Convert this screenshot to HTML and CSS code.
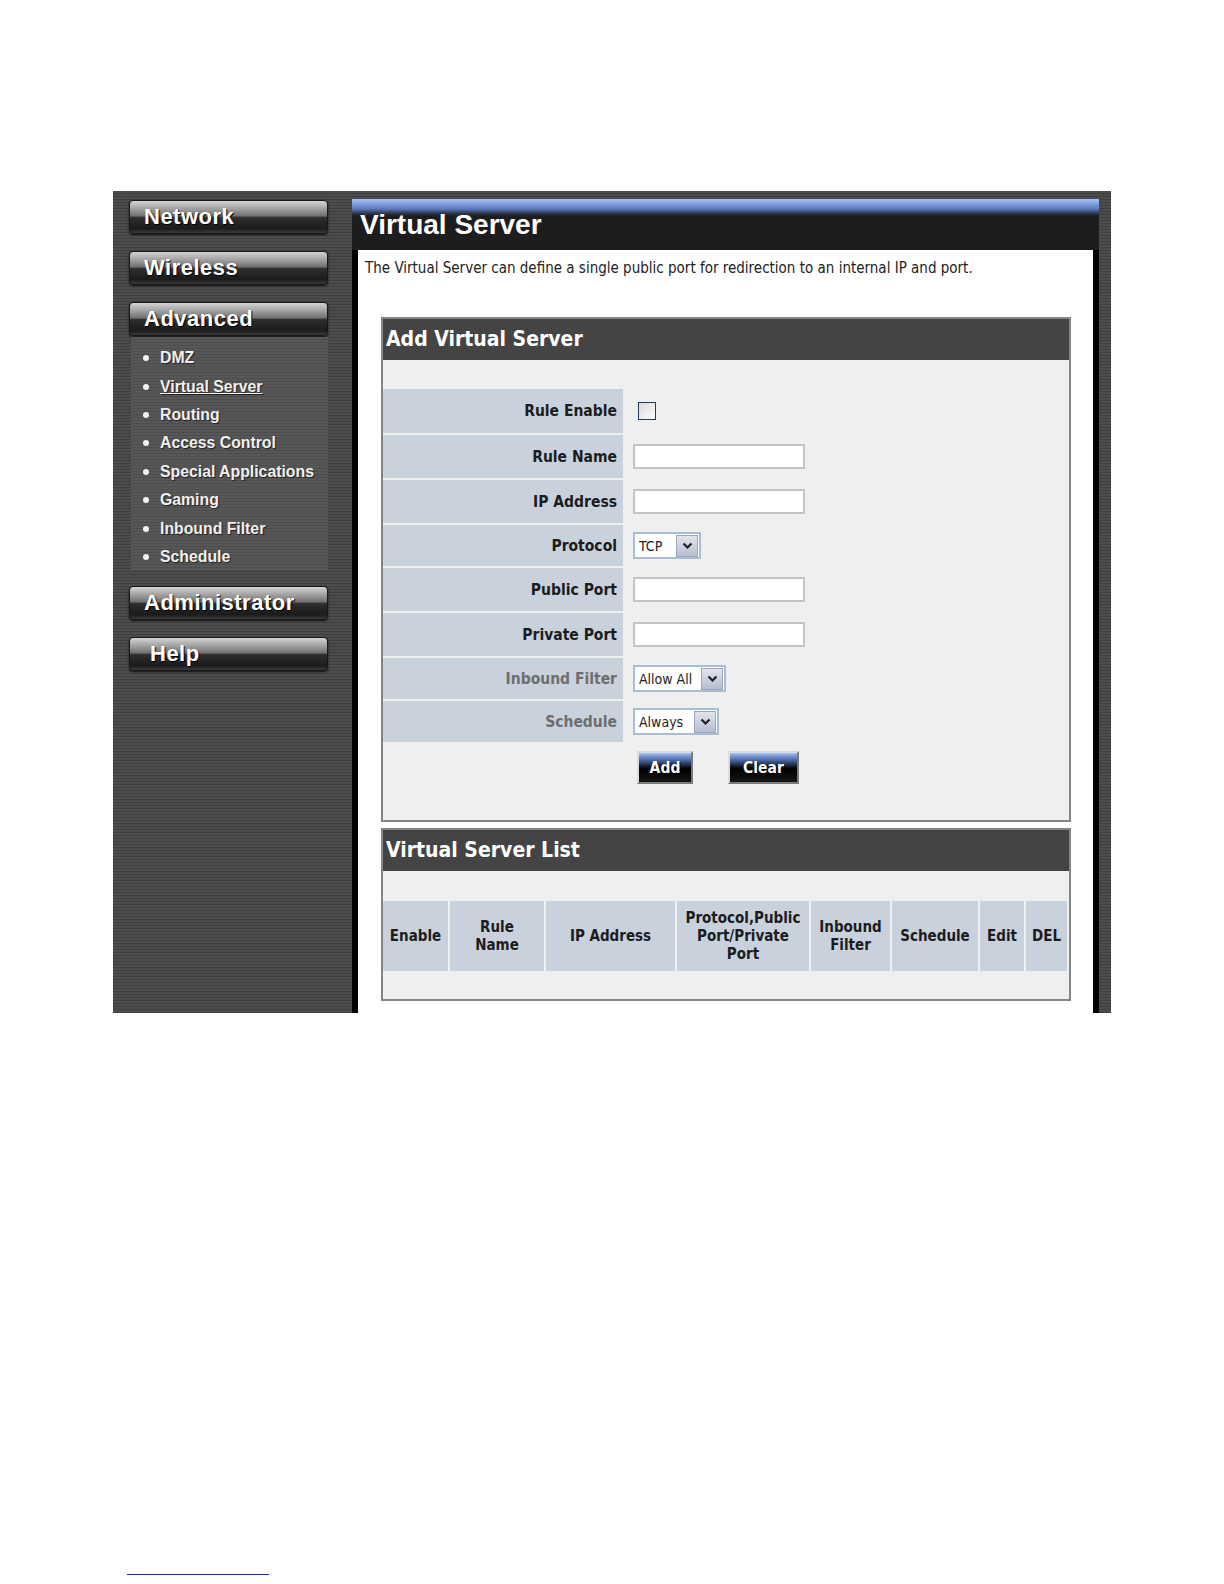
FILE: index.html
```html
<!DOCTYPE html>
<html lang="en">
<head>
<meta charset="UTF-8">
<title>Virtual Server</title>
<link rel="stylesheet" href="styles.css">
</head>
<body>
<div class="frame">
    <div class="sidebar">
        <a class="nav-btn" href="#">Network</a>
        <a class="nav-btn" href="#">Wireless</a>
        <a class="nav-btn nav-open" href="#">Advanced</a>
        <ul class="submenu">
            <li><a href="#">DMZ</a></li>
            <li><a href="#" class="current">Virtual Server</a></li>
            <li><a href="#">Routing</a></li>
            <li><a href="#">Access Control</a></li>
            <li><a href="#">Special Applications</a></li>
            <li><a href="#">Gaming</a></li>
            <li><a href="#">Inbound Filter</a></li>
            <li><a href="#">Schedule</a></li>
        </ul>
        <a class="nav-btn nav-admin" href="#">Administrator</a>
        <a class="nav-btn nav-help" href="#">Help</a>
    </div>

    <div class="main">
        <div class="title-bar"><h1>Virtual Server</h1></div>
        <div class="content">
            <p class="intro">The Virtual Server can define a single public port for redirection to an internal IP and port.</p>

            <div class="box add-box">
                <div class="box-head">Add Virtual Server</div>
                <div class="box-body">
                    <div class="form-row first">
                        <label>Rule Enable</label>
                        <div class="field"><input type="checkbox" class="check"></div>
                    </div>
                    <div class="form-row tall">
                        <label>Rule Name</label>
                        <div class="field"><input type="text" class="text-in"></div>
                    </div>
                    <div class="form-row tall">
                        <label>IP Address</label>
                        <div class="field"><input type="text" class="text-in"></div>
                    </div>
                    <div class="form-row">
                        <label>Protocol</label>
                        <div class="field">
                            <div class="select sel-tcp"><span class="select-val">TCP</span><span class="select-arrow"><svg width="11" height="9" viewBox="0 0 11 9"><path d="M1.5 2.5 L5.5 6.5 L9.5 2.5" fill="none" stroke="#1e1e1e" stroke-width="2.2"/></svg></span></div>
                        </div>
                    </div>
                    <div class="form-row tall">
                        <label>Public Port</label>
                        <div class="field"><input type="text" class="text-in"></div>
                    </div>
                    <div class="form-row tall">
                        <label>Private Port</label>
                        <div class="field"><input type="text" class="text-in"></div>
                    </div>
                    <div class="form-row">
                        <label class="dim">Inbound Filter</label>
                        <div class="field">
                            <div class="select sel-allow"><span class="select-val">Allow All</span><span class="select-arrow"><svg width="11" height="9" viewBox="0 0 11 9"><path d="M1.5 2.5 L5.5 6.5 L9.5 2.5" fill="none" stroke="#1e1e1e" stroke-width="2.2"/></svg></span></div>
                        </div>
                    </div>
                    <div class="form-row">
                        <label class="dim">Schedule</label>
                        <div class="field">
                            <div class="select sel-always"><span class="select-val">Always</span><span class="select-arrow"><svg width="11" height="9" viewBox="0 0 11 9"><path d="M1.5 2.5 L5.5 6.5 L9.5 2.5" fill="none" stroke="#1e1e1e" stroke-width="2.2"/></svg></span></div>
                        </div>
                    </div>
                    <div class="btn-row">
                        <button class="btn btn-add">Add</button>
                        <button class="btn btn-clear">Clear</button>
                    </div>
                </div>
            </div>

            <div class="box list-box">
                <div class="box-head">Virtual Server List</div>
                <div class="box-body">
                    <div class="list-head">
                        <div>Enable</div>
                        <div>Rule<br>Name</div>
                        <div>IP Address</div>
                        <div>Protocol,Public<br>Port/Private<br>Port</div>
                        <div>Inbound<br>Filter</div>
                        <div>Schedule</div>
                        <div>Edit</div>
                        <div>DEL</div>
                    </div>
                </div>
            </div>
        </div>
    </div>
</div>
<div class="footnote-rule"></div>
</body>
</html>
```

FILE: styles.css
```css
body {
  margin: 0;
  background: #fff;
  font-family: "DejaVu Sans Condensed", "DejaVu Sans", sans-serif;
}

.frame {
  display: flex;
  width: 998px;
  height: 822px;
  margin: 191px 0 0 113px;
  background: repeating-linear-gradient(to bottom, #4c4c4c 0, #4c4c4c 2px, #3f3f3f 2px, #3f3f3f 3px);
}

/* left menu */
.sidebar {
  width: 239px;
  padding: 9px 0 0 16px;
  box-sizing: border-box;
  display: flex;
  flex-direction: column;
  align-items: flex-start;
}
.nav-btn {
  display: block;
  width: 199px;
  height: 34px;
  box-sizing: border-box;
  padding-left: 14px;
  margin-bottom: 17px;
  border: 1px solid #181818;
  border-radius: 4px;
  background: linear-gradient(to bottom, #d4d4d4 0%, #a6a6a6 22%, #727272 46%, #2e2e2e 52%, #1b1b1b 86%, #3a3a3a 100%);
  box-shadow: 0 1px 2px #111;
  color: #fff;
  font: bold 22px/32px "Liberation Sans", Arial, sans-serif;
  letter-spacing: 0.5px;
  text-decoration: none;
  text-shadow: 1px 1px 1px #000;
}
.nav-open {
  margin-bottom: 1px;
}
.nav-help {
  padding-left: 20px;
}
.submenu {
  list-style: none;
  margin: 0 0 15px 2px;
  padding: 7px 0 0 12px;
  width: 197px;
  height: 234px;
  box-sizing: border-box;
  background: repeating-linear-gradient(to bottom, #575757 0, #575757 2px, #4d4d4d 2px, #4d4d4d 3px);
}
.submenu li {
  height: 28.4px;
  display: flex;
  align-items: center;
}
.submenu li::before {
  content: "";
  width: 6px;
  height: 6px;
  border-radius: 50%;
  background: #f2f2f2;
  margin-right: 11px;
}
.submenu a {
  color: #f0f0f0;
  font: bold 15.8px "Liberation Sans", Arial, sans-serif;
  text-decoration: none;
  text-shadow: 1px 1px 1px #222;
}
.submenu a.current {
  text-decoration: underline;
}

/* main panel */
.main {
  width: 747px;
  padding-top: 8px;
  box-sizing: border-box;
  display: flex;
  flex-direction: column;
}
.title-bar {
  height: 51px;
  box-sizing: border-box;
  padding: 14px 0 0 8px;
  background: linear-gradient(to bottom, #a6c2f4 0, #86a3e4 4px, #5d79bb 10px, #2f3a55 14px, #1d1d1d 17px, #1d1d1d 100%);
}
.title-bar h1 {
  margin: 0;
  color: #fff;
  font: bold 28px/24px "Liberation Sans", Arial, sans-serif;
}
.content {
  flex: 1;
  background: #fff;
  border-left: 6px solid #000;
  border-right: 6px solid #000;
  padding: 9px 22px 0 7px;
}
.intro {
  margin: 0;
  font-size: 15px;
  line-height: 18px;
  color: #222;
}

.box {
  margin-left: 16px;
  border: 2px solid #858585;
  background: #efefef;
}
.add-box {
  margin-top: 40px;
}
.list-box {
  margin-top: 6px;
}
.box-head {
  height: 41px;
  padding-left: 3px;
  background: #444;
  color: #fff;
  font-weight: bold;
  font-size: 21px;
  line-height: 41px;
}
.add-box .box-body {
  padding: 29px 0 36px 0;
}

.form-row {
  display: flex;
  height: 41px;
  margin-bottom: 2px;
}
.form-row.first {
  height: 44px;
}
.form-row.tall {
  height: 43px;
}
.form-row label {
  width: 240px;
  box-sizing: border-box;
  padding-right: 6px;
  display: flex;
  align-items: center;
  justify-content: flex-end;
  background: #c8d1dc;
  color: #1c1c1c;
  font-weight: bold;
  font-size: 15.5px;
}
.form-row label.dim {
  color: #6e6e6e;
}
.field {
  padding-left: 10px;
  display: flex;
  align-items: center;
}
.check {
  appearance: none;
  margin: 0 0 0 5px;
  width: 18px;
  height: 18px;
  border: 1px solid #1f3d5c;
  background: linear-gradient(135deg, #d8d8d8, #fff);
}
.text-in {
  width: 172px;
  height: 25px;
  box-sizing: border-box;
  margin: 0;
  border: 2px solid #c4c4c4;
  background: #fff;
}

.select {
  display: flex;
  align-items: center;
  height: 27px;
  box-sizing: border-box;
  border: 2px solid #a9bdd8;
  background: #fff;
}
.sel-tcp { width: 68px; }
.sel-allow { width: 93px; }
.sel-always { width: 86px; }
.select-val {
  flex: 1;
  padding-left: 4px;
  font-size: 14px;
  color: #222;
}
.select-arrow {
  width: 20px;
  height: 20px;
  margin-right: 1px;
  display: flex;
  align-items: center;
  justify-content: center;
  border: 1px solid #9ea6bb;
  background: linear-gradient(to bottom, #e2e5ee, #b6bdd0);
}

.btn-row {
  padding-left: 254px;
  margin-top: 9px;
  display: flex;
}
.btn {
  height: 33px;
  margin: 0 35px 0 0;
  padding: 0;
  border: 2px solid;
  border-color: #dcdcdc #7a7a7a #7a7a7a #dcdcdc;
  background: linear-gradient(to bottom, #a9c4f2 0, #7592d2 12%, #3d5488 30%, #141a28 46%, #000 55%, #161616 100%);
  color: #fff;
  font-family: "DejaVu Sans Condensed", "DejaVu Sans", sans-serif;
  font-weight: bold;
  font-size: 15.5px;
  text-shadow: 1px 1px 0 #000;
}
.btn-add { width: 56px; }
.btn-clear { width: 71px; }

.list-box .box-body {
  padding: 30px 0 28px 0;
}
.list-head {
  display: grid;
  grid-template-columns: 65px 94px 129px 132px 79px 86px 44px 41px;
  column-gap: 2px;
}
.list-head div {
  height: 70px;
  display: flex;
  align-items: center;
  justify-content: center;
  text-align: center;
  background: #c8d1dc;
  color: #1c1c1c;
  font-weight: bold;
  font-size: 15px;
  line-height: 18px;
}

.footnote-rule {
  width: 142px;
  margin: 561px 0 0 127px;
  border-top: 1px solid #22229a;
}
```
